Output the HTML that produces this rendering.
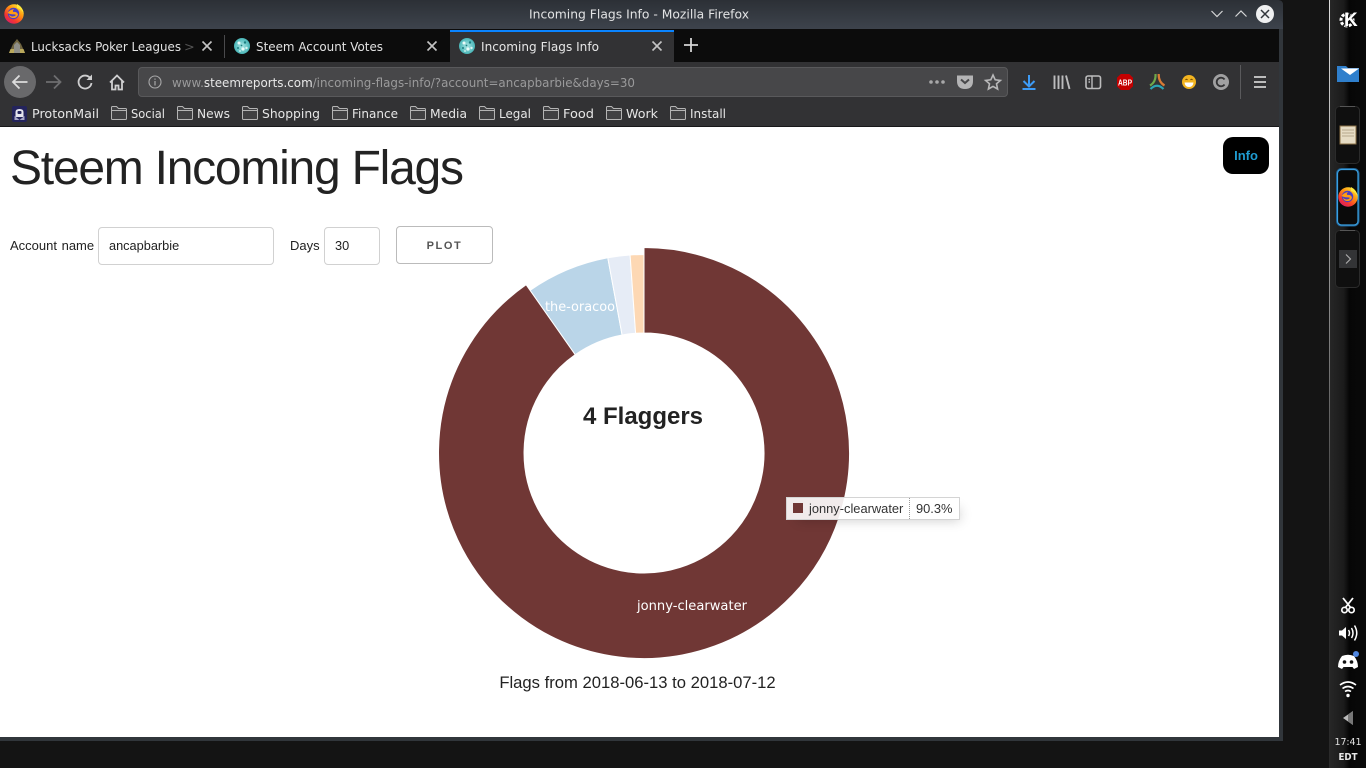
<!DOCTYPE html>
<html lang="en"><head><meta charset="utf-8"><title>Incoming Flags Info</title>
<style>
html,body{margin:0;padding:0;width:1366px;height:768px;overflow:hidden;background:#141414}
svg{position:absolute;left:0;top:0}
#page{position:absolute;left:0;top:127px;width:1279px;height:610px;background:#fff;font-family:"Liberation Sans",sans-serif;color:#222}
#page h1{position:absolute;left:10px;top:14px;margin:0;font-size:48px;line-height:56px;font-weight:300;letter-spacing:-1.24px;white-space:nowrap}
#page label{position:absolute;font-size:13px;line-height:16px;top:111px;color:#222;word-spacing:1px;white-space:nowrap}
#page input{position:absolute;box-sizing:border-box;height:38px;top:100px;border:1px solid #d1d1d1;border-radius:4px;padding:0 10px 2px;font:12.75px "Liberation Sans",sans-serif;color:#222;background:#fff;outline:0;margin:0}
#plot{position:absolute;left:396px;top:99px;width:97px;height:38px;box-sizing:border-box;border:1px solid #bbb;border-radius:4px;background:#fff;color:#555;font:bold 11px "Liberation Sans",sans-serif;letter-spacing:1.6px;text-align:center;line-height:38px;padding:0}
#info{position:absolute;left:1223px;top:10px;width:46px;height:37px;background:#000;border-radius:10px;color:#1f9bd1;font:bold 13px/37px "Liberation Sans",sans-serif;text-align:center}
#tip{position:absolute;left:786px;top:370px;width:174px;height:23px;box-sizing:border-box;border:1px solid #d4d4d4;background:rgba(255,255,255,.9);box-shadow:6px 6px 12px -6px rgba(0,0,0,.22);font:12.87px/21px "Liberation Sans",sans-serif;color:#333}
#tip i{position:absolute;left:6px;top:5px;width:10px;height:10px;background:#703735}
#tip b{position:absolute;left:22px;top:0;font-weight:400;white-space:nowrap}
#tip u{position:absolute;left:122px;top:0;height:21px;border-left:1px dotted #999}
#tip s{position:absolute;left:129px;top:0;text-decoration:none}
</style></head><body>
<svg width="1366" height="768" viewBox="0 0 1366 768" font-family="'DejaVu Sans',sans-serif">
<defs>
<linearGradient id="tb" x1="0" y1="0" x2="0" y2="1"><stop offset="0" stop-color="#2c3036"/><stop offset="1" stop-color="#3d434c"/></linearGradient>
<linearGradient id="pn" x1="0" y1="0" x2="1" y2="0"><stop offset="0" stop-color="#272727"/><stop offset=".4" stop-color="#1b1b1b"/><stop offset=".55" stop-color="#060606"/><stop offset="1" stop-color="#0a0a0a"/></linearGradient>
<linearGradient id="ln" x1="0" y1="0" x2="0" y2="1"><stop offset="0" stop-color="#ddd"/><stop offset=".4" stop-color="#888"/><stop offset=".75" stop-color="#2a2a2a"/></linearGradient>
<linearGradient id="ff" x1=".85" y1=".05" x2=".2" y2=".95"><stop offset="0" stop-color="#ffe93b"/><stop offset=".35" stop-color="#ff9a0f"/><stop offset=".75" stop-color="#f5372f"/><stop offset="1" stop-color="#d81f66"/></linearGradient>
<radialGradient id="st" cx=".5" cy=".5" r=".55"><stop offset="0" stop-color="#a8e6e4"/><stop offset="1" stop-color="#3fb0b2"/></radialGradient>
<g id="fold" fill="rgba(255,255,255,.07)" stroke="#b4b4b4" stroke-width="1"><path d="M.5 13.500V2.500Q.5 1.500 1.500 1.500H5.500L7.500 3.500H14.500Q15.500 3.500 15.500 4.500V13.500Q15.500 14.500 14.500 14.500H1.500Q.5 14.500 .5 13.500ZM.5 5.500H15.500"/></g>
<g id="fav"><circle r="8" fill="url(#st)"/><circle cx="-3" cy="-3" r="1.500" fill="#eafbf9"/><circle cx="3" cy="-3.500" r="1.200" fill="#1d7f82"/><circle cx="1" cy="3" r="1.600" fill="#eafbf9"/><circle cx="-4" cy="2" r="1" fill="#1d7f82"/><circle cx="4.500" cy="2" r="1.200" fill="#d8f5f2"/><circle cx="-.5" cy="-.5" r=".9" fill="#1d7f82"/><circle cx="-2" cy="5" r=".9" fill="#d8f5f2"/></g>
<g id="x" stroke="#c4c4c4" stroke-width="1.600" fill="none"><path d="M-4.500 -4.500L4.500 4.500M4.500 -4.500L-4.500 4.500"/></g>
<g id="fox"><circle r="9.700" fill="url(#ff)"/><path d="M3 -10Q9 -7 9.800 0Q8 -5 3 -6Z" fill="#ffe93b"/><circle cx="-.5" cy="-.5" r="5.700" fill="#4a3fc4"/><path d="M-6.500 -1Q-4 -4.500 0 -5Q-2 -3-.5 -2Q3 -2.500 4 .5Q3 4.500-1.500 4Q-4.500 3.500-5 .5Q-3 3 0 2.300Q2 1.800 1.500 .5L-2.500 .2Q-5 0-6.500 -1Z" fill="#ff9d12"/></g>
</defs>

<rect width="1366" height="768" fill="#141414"/>
<!-- window -->
<path d="M0 0H1277Q1283 0 1283 5V741H0Z" fill="#31363b"/>
<path d="M0 0H1277Q1283 0 1283 5V29H0Z" fill="url(#tb)"/>
<use href="#fox" x="14" y="14"/>
<text x="529" y="18.500" font-size="12.500" fill="#e2e3e4" textLength="220" lengthAdjust="spacingAndGlyphs">Incoming Flags Info - Mozilla Firefox</text>
<path d="M1211.500 11L1217 16.500L1222.500 11M1235.500 16.500L1241 11L1246.500 16.500" fill="none" stroke="#d5d6d7" stroke-width="1.200"/>
<circle cx="1265" cy="14" r="9" fill="#eff0f1"/>
<path d="M1261 10L1269 18M1269 10L1261 18" stroke="#31363b" stroke-width="1.500"/>

<!-- tabs -->
<rect x="0" y="29" width="1279" height="33" fill="#0c0c0c"/>
<rect x="450" y="32" width="224" height="30" fill="#323234"/>
<rect x="450" y="30" width="224" height="2" fill="#0a84ff"/>
<rect x="224" y="35" width="1" height="23" fill="#4a4a4c"/>
<path d="M9 53L13 44L17 39L21 44L25 53Z" fill="#6f6440"/><path d="M14 53V45L17 42L20 45V53Z" fill="#8f8f88"/><path d="M9 53H14V49H10.500ZM20 49H23.500L25 53H20Z" fill="#b9a85c"/>
<text x="31" y="51" font-size="12.800" fill="#e2e2e2" textLength="150" lengthAdjust="spacingAndGlyphs">Lucksacks Poker Leagues</text>
<text x="184" y="51" font-size="12.800" fill="#555">&gt;</text>
<use href="#x" x="207" y="46"/>
<use href="#fav" x="242" y="46"/>
<text x="256" y="51" font-size="12.800" fill="#e2e2e2" textLength="127" lengthAdjust="spacingAndGlyphs">Steem Account Votes</text>
<use href="#x" x="432" y="46"/>
<use href="#fav" x="467" y="46"/>
<text x="481" y="51" font-size="12.800" fill="#e6e6e6" textLength="118" lengthAdjust="spacingAndGlyphs">Incoming Flags Info</text>
<use href="#x" x="657" y="46"/>
<path d="M691 38V52M684 45H698" stroke="#d4d4d4" stroke-width="1.800"/>

<!-- nav -->
<rect x="0" y="62" width="1279" height="65" fill="#323234"/>
<rect x="0" y="126" width="1279" height="1" fill="#18181a"/>
<circle cx="20" cy="82" r="16" fill="#69696b"/>
<path d="M27.500 82H13M19.500 75.500L13 82L19.500 88.500" fill="none" stroke="#dcdcdc" stroke-width="1.800"/>
<path d="M60.500 82H46M54 75.500L60.500 82L54 88.500" fill="none" stroke="#6e6e70" stroke-width="1.800"/>
<path d="M90.500 78.500A6.500 6.500 0 1 0 91.500 83" fill="none" stroke="#cfcfd0" stroke-width="1.800"/><path d="M92 74.500V80H86.500Z" fill="#cfcfd0"/>
<path d="M110 82.500L117 75.500L124 82.500M112 81V89.500H115.500V85.500H118.500V89.500H122V81" fill="none" stroke="#cfcfd0" stroke-width="1.800"/>
<rect x="138.500" y="67.500" width="869" height="29" rx="3.500" fill="#474749" stroke="#59595b"/>
<circle cx="155" cy="82" r="6" fill="none" stroke="#a8a8a9" stroke-width="1.100"/><path d="M155 81V85.500M155 78.500V79.800" stroke="#a8a8a9" stroke-width="1.200"/>
<text x="172" y="87" font-size="12.800" textLength="463" lengthAdjust="spacingAndGlyphs" fill="#9a9a9b">www.<tspan fill="#e8e8e8">steemreports.com</tspan>/incoming-flags-info/?account=ancapbarbie&amp;days=30</text>
<g fill="#a8a8a9"><circle cx="931" cy="82" r="1.800"/><circle cx="937" cy="82" r="1.800"/><circle cx="943" cy="82" r="1.800"/></g>
<path d="M957 75.500H973V81Q973 89 965 89Q957 89 957 81Z" fill="#b4b4b5"/><path d="M961 79.500L965 83L969 79.500" fill="none" stroke="#474749" stroke-width="2"/>
<path d="M993 75L995.200 79.800L1000.400 80.400L996.500 83.800L997.600 89L993 86.400L988.400 89L989.500 83.800L985.600 80.400L990.800 79.800Z" fill="none" stroke="#b8b8b9" stroke-width="1.600"/>
<path d="M1029 75V86M1023.500 81L1029 86.500L1034.500 81" fill="none" stroke="#3d9bf6" stroke-width="2"/><rect x="1022.500" y="88" width="13" height="2" fill="#3d9bf6"/>
<path d="M1054.500 75.500V89M1058.500 75.500V89M1062.500 75.500V89M1066 75.500L1069.500 89" fill="none" stroke="#bcbcbd" stroke-width="1.900"/>
<rect x="1086" y="76" width="14.500" height="12.500" rx="2" fill="none" stroke="#bcbcbd" stroke-width="1.600"/><path d="M1092 76V88.500M1088.500 79.500H1090M1088.500 82H1090" stroke="#bcbcbd" stroke-width="1.400"/>
<path d="M1120.800 74H1129.200L1133 77.800V86.200L1129.200 90H1120.800L1117 86.200V77.800Z" fill="#c40000"/>
<text x="1125" y="85.500" font-size="8" font-weight="bold" fill="#fff" text-anchor="middle" textLength="14" lengthAdjust="spacingAndGlyphs" font-family="'Liberation Sans',sans-serif">ABP</text>
<g fill="none" stroke-width="2.200"><path d="M1155.500 74Q1156 82 1150 85.500" stroke="#6fa84a"/><path d="M1158.700 74Q1158.500 82 1164.500 85.500" stroke="#d87a35"/><path d="M1150.500 89Q1157 82.500 1163.500 89" stroke="#2ca4b4"/></g>
<circle cx="1189" cy="82" r="7" fill="#f2b420"/><path d="M1184.500 82.500H1193.500Q1193 87 1189 87Q1185 87 1184.500 82.500Z" fill="#fff"/><path d="M1185.500 80Q1186.500 78.500 1187.500 80M1190.500 80Q1191.500 78.500 1192.500 80" fill="none" stroke="#6b4300" stroke-width=".9"/>
<circle cx="1221" cy="82" r="8" fill="#a0a0a1"/><path d="M1224.500 79.500A4.300 4.300 0 1 0 1224.500 84.500" fill="none" stroke="#323234" stroke-width="1.800"/>
<rect x="1240" y="65" width="1" height="34" fill="#5a5a5c"/>
<path d="M1254 77H1266M1254 82H1266M1254 87H1266" stroke="#cfcfd0" stroke-width="1.700"/>

<!-- bookmarks -->
<rect x="12" y="106" width="15" height="16" rx="2" fill="#24245c"/><path d="M15.500 117V112Q15.500 109 19.500 109Q23.500 109 23.500 112V117Z" fill="#e6e6ee"/><rect x="17.500" y="111" width="4" height="3" rx="1" fill="#24245c"/><path d="M14.500 116L19.500 120L24.500 116V120H14.500Z" fill="#a8a8c8"/>
<g font-size="12.800" fill="#e6e6e6">
<text x="32" y="118" textLength="67" lengthAdjust="spacingAndGlyphs">ProtonMail</text>
<use href="#fold" x="111" y="105"/><text x="131" y="118" textLength="34" lengthAdjust="spacingAndGlyphs">Social</text>
<use href="#fold" x="177" y="105"/><text x="197" y="118" textLength="33" lengthAdjust="spacingAndGlyphs">News</text>
<use href="#fold" x="242" y="105"/><text x="262" y="118" textLength="58" lengthAdjust="spacingAndGlyphs">Shopping</text>
<use href="#fold" x="332" y="105"/><text x="352" y="118" textLength="46" lengthAdjust="spacingAndGlyphs">Finance</text>
<use href="#fold" x="410" y="105"/><text x="430" y="118" textLength="37" lengthAdjust="spacingAndGlyphs">Media</text>
<use href="#fold" x="479" y="105"/><text x="499" y="118" textLength="32" lengthAdjust="spacingAndGlyphs">Legal</text>
<use href="#fold" x="543" y="105"/><text x="563" y="118" textLength="31" lengthAdjust="spacingAndGlyphs">Food</text>
<use href="#fold" x="606" y="105"/><text x="626" y="118" textLength="32" lengthAdjust="spacingAndGlyphs">Work</text>
<use href="#fold" x="670" y="105"/><text x="690" y="118" textLength="36" lengthAdjust="spacingAndGlyphs">Install</text>
</g>

<!-- right panel -->
<rect x="1329" y="0" width="37" height="768" fill="url(#pn)"/>
<rect x="1329" y="0" width="1" height="768" fill="url(#ln)"/>
<circle cx="1347" cy="20" r="6" fill="none" stroke="#fff" stroke-width="3" stroke-dasharray="3 1.500"/>
<text x="1344" y="26" font-size="19" font-weight="bold" fill="#fff" stroke="#0c0c0c" stroke-width=".8" paint-order="stroke" font-family="'Liberation Sans',sans-serif">K</text>
<path d="M1337 66H1346L1348 68H1359V82H1337Z" fill="#2f7fcc"/><path d="M1341 68.500H1359L1350 75Z" fill="#fff"/>
<g fill="#0f0f0f" stroke="#2b2b2b"><rect x="1335.500" y="106.500" width="24" height="57" rx="4"/><rect x="1335.500" y="230.500" width="24" height="57" rx="4"/></g>
<path d="M1340 106.500H1355M1340 230.500H1355" stroke="#555"/>
<rect x="1337.500" y="169.500" width="20.500" height="55.500" rx="4" fill="#0a0a0a" stroke="#1f5f8f" stroke-width="3"/>
<rect x="1337.500" y="169.500" width="20.500" height="55.500" rx="4" fill="#0a0a0a" stroke="#3a9fe0" stroke-width="1.200"/>
<rect x="1340" y="126" width="16" height="18" fill="#e6dcc4" stroke="#8a6f45"/><path d="M1342 130H1354M1342 133H1354M1342 136H1354" stroke="#b5a98d"/>
<use href="#fox" x="1348" y="197"/>
<rect x="1339" y="250" width="18" height="18" fill="#333436"/><path d="M1346 254.500L1350.500 259L1346 263.500" fill="none" stroke="#b0b0b0" stroke-width="1.100"/>
<path d="M1343 598L1351 608M1353 598L1345 608" stroke="#fff" stroke-width="1.800"/><circle cx="1344.500" cy="610" r="2.700" fill="none" stroke="#fff" stroke-width="1.700"/><circle cx="1351.500" cy="610" r="2.700" fill="none" stroke="#fff" stroke-width="1.700"/>
<path d="M1339 630.500H1342L1346 627V639L1342 635.500H1339Z" fill="#fff"/><path d="M1348.500 630Q1350.500 633 1348.500 636M1351.500 628Q1354.500 633 1351.500 638M1354.500 625.500Q1359 633 1354.500 640.500" fill="none" stroke="#fff" stroke-width="1.500"/>
<path d="M1342 656Q1348 653.500 1354 656Q1358 661 1358 667L1354 669L1352.500 667H1343.500L1342 669L1338 667Q1338 661 1342 656Z" fill="#fff"/><circle cx="1344.500" cy="662" r="1.800" fill="#111"/><circle cx="1351.500" cy="662" r="1.800" fill="#111"/><circle cx="1356" cy="654" r="3" fill="#4f86e0"/>
<path d="M1340 685Q1348 679 1356 685M1342.500 688.500Q1348 684.500 1353.500 688.500M1345 691.500Q1348 689.500 1351 691.500" fill="none" stroke="#fff" stroke-width="1.600"/><circle cx="1348" cy="695.500" r="1.700" fill="#fff"/>
<path d="M1353 711V725L1343 718Z" fill="#bbb"/><path d="M1353 711V725L1348 721.500V714.500Z" fill="#777"/>
<text x="1348" y="745" font-size="9.500" fill="#e0e0e0" text-anchor="middle" textLength="27" lengthAdjust="spacing">17:41</text>
<text x="1348" y="760" font-size="9.500" font-weight="bold" fill="#e8e8e8" text-anchor="middle" textLength="19" lengthAdjust="spacingAndGlyphs">EDT</text>
</svg>

<div id="page">
<h1>Steem Incoming Flags</h1>
<label style="left:10px">Account name</label>
<input style="left:98px;width:176px" value="ancapbarbie">
<label style="left:290px">Days</label>
<input style="left:324px;width:56px" value="30">
<button id="plot">PLOT</button>
<div id="info">Info</div>

<svg width="1279" height="610" viewBox="0 127 1279 610" font-family="'DejaVu Sans',sans-serif">
<g stroke="#fff" stroke-width="1">
<path d="M530.100 290.400A198.500 198.500 0 0 1 607.800 257.800L622.100 335A120 120 0 0 0 575.200 354.700Z" fill="#bad5e8"/>
<path d="M607.800 257.800A198.500 198.500 0 0 1 630.100 255L635.600 333.300A120 120 0 0 0 622.100 335Z" fill="#e6ecf6"/>
<path d="M630.100 255A198.500 198.500 0 0 1 644 254.500V333A120 120 0 0 0 635.600 333.300Z" fill="#fdd8b4"/>
<path d="M644 247.500A205.500 205.500 0 1 1 526.100 284.700L575.200 354.700A120 120 0 1 0 644 333Z" fill="#703735"/>
</g>
<text x="545" y="311" font-size="13" fill="#fff" textLength="70" lengthAdjust="spacingAndGlyphs">the-oracoo</text>
<text x="637" y="610" font-size="13" fill="#fff" textLength="110" lengthAdjust="spacingAndGlyphs">jonny-clearwater</text>
<text x="643" y="424" font-size="24" font-weight="bold" fill="#222" text-anchor="middle" font-family="'Liberation Sans',sans-serif">4 Flaggers</text>
<text x="637.500" y="688" font-size="16.640" fill="#222" text-anchor="middle" font-family="'Liberation Sans',sans-serif">Flags from 2018-06-13 to 2018-07-12</text>
</svg>

<div id="tip"><i></i><b>jonny-clearwater</b><u></u><s>90.3%</s></div>
</div>
</body></html>
